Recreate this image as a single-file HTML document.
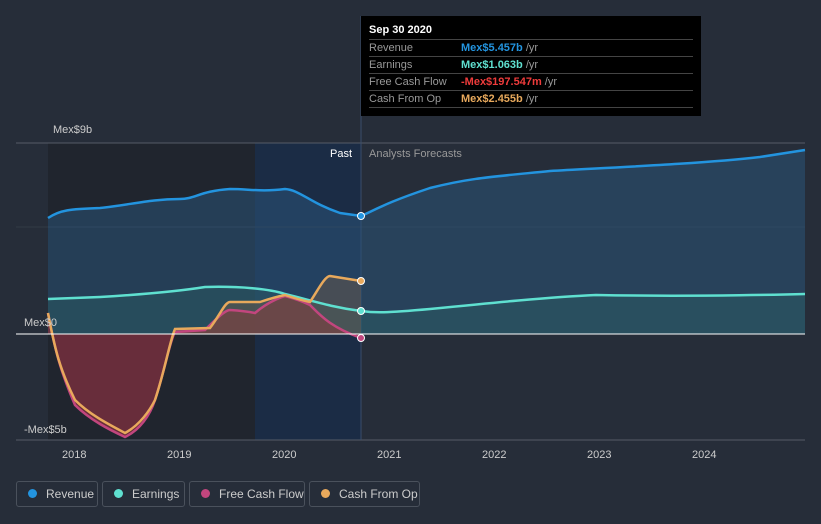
<!DOCTYPE html>
<html><head><style>
body{margin:0;background:#262d39;width:821px;height:524px;overflow:hidden;font-family:"Liberation Sans",sans-serif}
.tt{position:absolute;left:361px;top:16px;width:340px;height:100px;background:#000;color:#fff;font-size:11px}
.tt .h{font-weight:bold;padding:8px 0 0 8px;height:15px}
.tt .r{margin:0 8px;border-top:1px solid #444;height:16px;line-height:16px;display:flex;color:#999}
.tt .r span:first-child{width:92px}
.leg{position:absolute;top:481px;height:26px;border:1px solid #4a515c;border-radius:3px;color:#ccc;font-size:12px;line-height:25px;box-sizing:border-box;white-space:nowrap;overflow:hidden}
.leg i{display:inline-block;width:9px;height:9px;border-radius:50%;margin:0 9px 0 11px}
</style></head><body>
<svg width="821" height="524" style="position:absolute;left:0;top:0">
<rect x="48" y="143" width="207" height="297" fill="#20252e"/>
<rect x="255" y="143" width="106" height="297" fill="#1b2c45"/>
<line x1="16" y1="143" x2="805" y2="143" stroke="#555c66"/>
<line x1="16" y1="227" x2="805" y2="227" stroke="#333a45"/>
<line x1="16" y1="440" x2="805" y2="440" stroke="#555c66"/>
<line x1="361" y1="16" x2="361" y2="440" stroke="#3a4d6a"/>
<path d="M48,218 C60,210 70,209 100,208 C130,205 150,199 180,199 C195,199 200,191 230,189 C250,189 260,192 285,189 C300,190 310,203 340,213 L361,216 C375,210 385,203 430,188 C470,178 490,177 550,171 C600,168 700,164 760,157 L805,150 L805,334 L48,334Z" fill="#2a5378" opacity="0.55"/>
<path d="M48,299 L100,297 C150,294 180,291 205,287 C240,286 270,289 285,294 C310,300 330,307 361,311 C375,313 385,313 430,309 C490,303 550,297 596,295 C700,297 805,294 805,294 L805,334 L48,334Z" fill="#2d6e6a" opacity="0.3"/>
<path d="M48,313 C55,350 60,370 75,405 C90,420 110,430 125,437 C140,430 150,415 155,400 C165,370 170,340 175,332 L205,330 C215,320 225,310 230,310 C245,311 255,313 255,313 C270,300 285,296 285,296 C300,300 310,305 310,305 C320,315 330,327 361,338 L361,334 L48,334Z" fill="#7a2f3e" opacity="0.8"/>
<path d="M175,329 L210,328 C220,315 225,302 230,302 L260,302 C275,297 285,295 285,295 C300,300 310,302 310,302 C318,290 325,276 330,276 L361,281 L361,334 L175,334Z" fill="#6b5a4a" opacity="0.5"/>
<path d="M48,218 C60,210 70,209 100,208 C130,205 150,199 180,199 C195,199 200,191 230,189 C250,189 260,192 285,189 C300,190 310,203 340,213 L361,216 C375,210 385,203 430,188 C470,178 490,177 550,171 C600,168 700,164 760,157 L805,150" fill="none" stroke="#2394df" stroke-width="2.5"/>
<path d="M48,299 L100,297 C150,294 180,291 205,287 C240,286 270,289 285,294 C310,300 330,307 361,311 C375,313 385,313 430,309 C490,303 550,297 596,295 C700,297 805,294 805,294" fill="none" stroke="#5fe0d0" stroke-width="2.5"/>
<path d="M48,313 C55,350 60,370 75,405 C90,420 110,430 125,437 C140,430 150,415 155,400 C165,370 170,340 175,332 L205,330 C215,320 225,310 230,310 C245,311 255,313 255,313 C270,300 285,296 285,296 C300,300 310,305 310,305 C320,315 330,327 361,338" fill="none" stroke="#c2467e" stroke-width="2.5"/>
<path d="M48,313 C55,350 60,370 75,400 C90,415 110,425 125,433 C140,425 150,410 155,400 C165,370 170,340 175,329 L210,328 C220,315 225,302 230,302 L260,302 C275,297 285,295 285,295 C300,300 310,302 310,302 C318,290 325,276 330,276 L361,281" fill="none" stroke="#e8a95c" stroke-width="2.5"/>
<line x1="16" y1="334" x2="805" y2="334" stroke="#fff" stroke-width="1"/>
<circle cx="361" cy="216" r="3.5" fill="#2394df" stroke="#fff"/>
<circle cx="361" cy="311" r="3.5" fill="#5fe0d0" stroke="#fff"/>
<circle cx="361" cy="281" r="3.5" fill="#e8a95c" stroke="#fff"/>
<circle cx="361" cy="338" r="3.5" fill="#c2467e" stroke="#fff"/>
<g font-size="11" fill="#ccc" font-family="Liberation Sans">
<text x="53" y="133">Mex$9b</text><text x="24" y="326">Mex$0</text><text x="24" y="433">-Mex$5b</text>
<text x="330" y="157" fill="#fff">Past</text><text x="369" y="157" fill="#999">Analysts Forecasts</text>
<text x="62" y="458">2018</text><text x="167" y="458">2019</text><text x="272" y="458">2020</text><text x="377" y="458">2021</text><text x="482" y="458">2022</text><text x="587" y="458">2023</text><text x="692" y="458">2024</text>
</g></svg>
<div class="tt"><div class="h">Sep 30 2020</div>
<div class="r"><span>Revenue</span><span><b style="color:#2394df">Mex$5.457b</b> /yr</span></div>
<div class="r"><span>Earnings</span><span><b style="color:#5fe0d0">Mex$1.063b</b> /yr</span></div>
<div class="r"><span>Free Cash Flow</span><span><b style="color:#ee3b3b">-Mex$197.547m</b> /yr</span></div>
<div class="r"><span>Cash From Op</span><span><b style="color:#e8a95c">Mex$2.455b</b> /yr</span></div>
<div class="r"></div></div>
<div class="leg" style="left:16px;width:82px"><i style="background:#2394df"></i>Revenue</div>
<div class="leg" style="left:102px;width:83px"><i style="background:#5fe0d0"></i>Earnings</div>
<div class="leg" style="left:189px;width:116px"><i style="background:#c2467e"></i>Free Cash Flow</div>
<div class="leg" style="left:309px;width:111px"><i style="background:#e8a95c"></i>Cash From Op</div>
</body></html>
